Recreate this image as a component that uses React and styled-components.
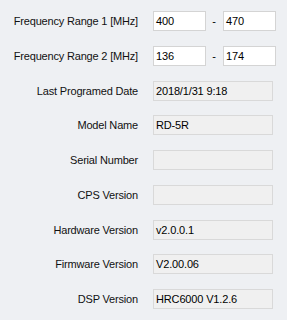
import React from "react";
import styled, { createGlobalStyle } from "styled-components";

const Global = createGlobalStyle`
  html, body {
    margin: 0;
    padding: 0;
    background: #eef0f3;
  }
  body {
    font-family: "Liberation Sans", Arial, sans-serif;
    font-size: 11px;
    color: #000;
  }
`;

const Panel = styled.div`
  width: 287px;
  height: 320px;
  box-sizing: border-box;
  padding-top: 11px;
  display: grid;
  grid-template-columns: 138px 1fr;
  column-gap: 15px;
  row-gap: 14.75px;
  grid-auto-rows: 20px;
  background: #eef0f3;
`;

const Label = styled.div`
  display: flex;
  align-items: center;
  justify-content: flex-end;
  white-space: nowrap;
  line-height: 20px;
  letter-spacing: -0.18px;
  color: #111;
`;

const Field = styled.div`
  display: flex;
  align-items: center;
`;

const Box = styled.div`
  box-sizing: border-box;
  width: ${(p) => p.$w}px;
  height: 20px;
  line-height: 18px;
  padding: 0 1px 0 2px;
  border: 1px solid ${(p) => (p.$readonly ? "#d9d9d9" : "#d4d4d4")};
  background: ${(p) => (p.$readonly ? "#f0f0f0" : "#ffffff")};
  white-space: nowrap;
  overflow: hidden;
  letter-spacing: -0.15px;
`;

const Dash = styled.span`
  width: 18px;
  text-align: center;
  margin-left: -1px;
`;

const rows = [
  ["Last Programed Date", "2018/1/31 9:18"],
  ["Model Name", "RD-5R"],
  ["Serial Number", ""],
  ["CPS Version", ""],
  ["Hardware Version", "v2.0.0.1"],
  ["Firmware Version", "V2.00.06"],
  ["DSP Version", "HRC6000 V1.2.6"],
];

const ranges = [
  ["Frequency Range 1 [MHz]", "400", "470"],
  ["Frequency Range 2 [MHz]", "136", "174"],
];

export default function App() {
  return (
    <>
      <Global />
      <Panel>
        {ranges.map(([label, a, b]) => (
          <React.Fragment key={label}>
            <Label>{label}</Label>
            <Field>
              <Box $w={53}>{a}</Box>
              <Dash>-</Dash>
              <Box $w={53}>{b}</Box>
            </Field>
          </React.Fragment>
        ))}
        {rows.map(([label, value]) => (
          <React.Fragment key={label}>
            <Label>{label}</Label>
            <Field>
              <Box $w={120} $readonly>
                {value}
              </Box>
            </Field>
          </React.Fragment>
        ))}
      </Panel>
    </>
  );
}
